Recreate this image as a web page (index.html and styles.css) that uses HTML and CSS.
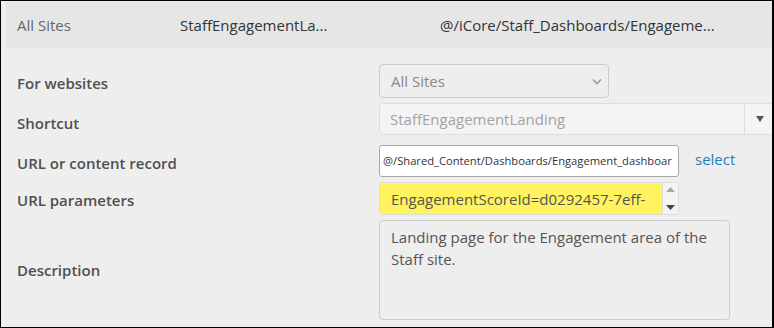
FILE: index.html
```html
<!DOCTYPE html>
<html lang="en">

<head>
  <meta charset="UTF-8">
  <meta name="viewport" content="width=device-width, initial-scale=1.0">
  <title>Shortcut</title>
  <link rel="stylesheet" href="styles.css">
</head>

<body>
  <div class="frame">
    <!-- 列表中被选中的一行 -->
    <div class="summary">
      <span class="site">All Sites</span>
      <span class="name">StaffEngagementLa...</span>
      <span class="path">@/iCore/Staff_Dashboards/Engageme...</span>
    </div>

    <!-- 编辑表单 -->
    <div class="form">
      <label class="row-sites">For websites</label>
      <div class="row-sites">
        <div class="select">
          <span>All Sites</span>
          <svg width="10" height="7" viewBox="0 0 10 7"><path d="M1 1.5 L5 5.5 L9 1.5" fill="none" stroke="#999" stroke-width="1.6"/></svg>
        </div>
      </div>

      <label class="row-shortcut">Shortcut</label>
      <div class="row-shortcut">
        <div class="combo">
          <span class="combo-text">StaffEngagementLanding</span>
          <span class="combo-btn"><svg width="8" height="6" viewBox="0 0 8 6"><path d="M0 0 H8 L4 6 Z" fill="#555"/></svg></span>
        </div>
      </div>

      <label class="row-url">URL or content record</label>
      <div class="row-url url-cell">
        <div class="text-input">@/Shared_Content/Dashboards/Engagement_dashboar</div>
        <a class="select-link" href="#">select</a>
      </div>

      <label class="row-params">URL parameters</label>
      <div class="row-params">
        <div class="params">
          <span class="params-text">EngagementScoreId=d0292457-7eff-</span>
          <span class="spinner">
            <svg width="9" height="5" viewBox="0 0 9 5"><path d="M0 5 L4.5 0 L9 5 Z" fill="#aaa"/></svg>
            <svg width="9" height="5" viewBox="0 0 9 5"><path d="M0 0 H9 L4.5 5 Z" fill="#444"/></svg>
          </span>
        </div>
      </div>

      <label class="row-desc">Description</label>
      <div class="row-desc">
        <div class="textarea">Landing page for the Engagement area of the Staff site.</div>
      </div>
    </div>
  </div>
</body>

</html>
```

FILE: styles.css
```css
body {
  margin: 0;
  padding: 0;
  background-color: #fff;
  font-family: "Open Sans", "Liberation Sans", sans-serif;
}

.frame {
  width: 774px;
  height: 328px;
  box-sizing: border-box;
  border: 1px solid #000;
  border-right-width: 2px;
  background-color: #eeeeee;
  overflow: hidden;
  padding-top: 1px;
}

.summary {
  display: flex;
  align-items: center;
  height: 46px;
  margin-left: 5px;
  background-color: #e6e6e6;
  font-size: 15px;
  color: #333;
}

.summary .site {
  width: 163px;
  padding-left: 11px;
  color: #666;
}

.summary .name {
  width: 260px;
}

.form {
  display: grid;
  grid-template-columns: 362px 1fr;
  align-items: center;
  padding: 16px 0 0 16px;
}

.form label {
  padding-top: 3px;
  font-size: 15px;
  font-weight: 600;
  color: #505050;
}

.form label.row-shortcut {
  padding-top: 7px;
}

.form label.row-desc {
  padding-top: 0;
}

.row-shortcut {
  margin-top: 5px;
}

.row-url {
  margin-top: 10px;
}

.row-params {
  margin-top: 5px;
}

.row-desc {
  margin-top: 5px;
}

.select {
  display: flex;
  align-items: center;
  justify-content: space-between;
  width: 230px;
  height: 34px;
  box-sizing: border-box;
  padding: 0 6px 0 11px;
  border: 1px solid #ccc;
  border-radius: 4px;
  background-color: #eeeeee;
  font-size: 15px;
  color: #888;
}

.combo {
  display: flex;
  width: 410px;
  height: 32px;
  box-sizing: border-box;
  border: 1px solid #ddd;
  border-radius: 4px;
  background-color: #f4f4f4;
}

.combo-text {
  flex: 1;
  display: flex;
  align-items: center;
  padding-left: 10px;
  font-size: 15px;
  color: #a3a3a3;
}

.combo-btn {
  display: flex;
  align-items: center;
  justify-content: center;
  width: 44px;
  border-left: 1px solid #ddd;
  box-sizing: border-box;
  padding-right: 14px;
}

.url-cell {
  display: flex;
  align-items: center;
}

.text-input {
  width: 300px;
  height: 32px;
  line-height: 30px;
  box-sizing: border-box;
  padding-left: 3px;
  border: 1px solid #aaa;
  border-radius: 3px;
  background-color: #fff;
  font-size: 11.2px;
  color: #333;
  white-space: nowrap;
  overflow: hidden;
}

.select-link {
  margin-left: 16px;
  margin-top: -4px;
  font-size: 15px;
  color: #1d7fb5;
  text-decoration: none;
}

.params {
  display: flex;
  width: 300px;
  height: 33px;
  box-sizing: border-box;
  border: 1px solid #ddd;
  border-radius: 3px;
  background-color: #f4f4f4;
  overflow: hidden;
}

.params-text {
  flex: 1;
  display: flex;
  align-items: center;
  padding-left: 11px;
  background-color: #fff35e;
  font-size: 15px;
  color: #555;
  white-space: nowrap;
  overflow: hidden;
}

.spinner {
  display: flex;
  flex-direction: column;
  justify-content: space-between;
  align-items: center;
  width: 16px;
  padding: 4px 0 4px;
  box-sizing: border-box;
  border-left: 1px solid #ddd;
}

.textarea {
  width: 351px;
  height: 100px;
  box-sizing: border-box;
  padding: 5px 11px;
  border: 1px solid #ccc;
  border-radius: 4px;
  background-color: #eeeeee;
  font-size: 15px;
  line-height: 22px;
  color: #555;
}
```
